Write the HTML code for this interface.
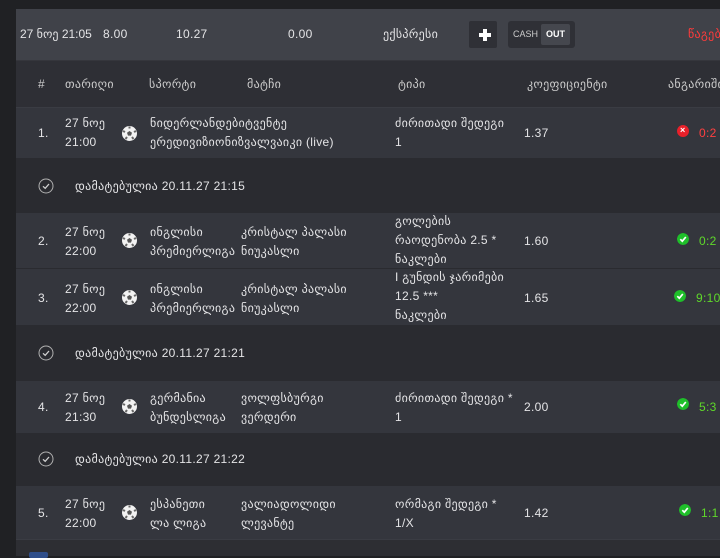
<!DOCTYPE html>
<html><head><meta charset="utf-8"><style>
*{margin:0;padding:0;box-sizing:border-box}
body{width:720px;height:556px;background:#202124;overflow:hidden;position:relative;font-family:"Liberation Sans","DejaVu Sans",sans-serif;color:#e4e4e6;font-size:12px}
.bar{position:absolute;left:16px;right:0}
.t{position:absolute;white-space:nowrap;line-height:19px;letter-spacing:0.3px}
.ball{position:absolute;width:15px;height:15px}
.chk{position:absolute;width:16px;height:16px}
.res{position:absolute;width:12px;height:12px;border-radius:50%}
</style></head><body>
<div class="bar" style="top:9px;height:51px;background:#404249"></div>
<div class="bar" style="top:60px;height:47px;background:#2e2f35;border-top:1px solid #35363c"></div>
<div class="bar" style="top:107px;height:51px;background:#34363d;border-top:1px solid #3a3c43"></div>
<div class="bar" style="top:158px;height:55px;background:#2a2b30"></div>
<div class="bar" style="top:213px;height:55px;background:#34363d"></div>
<div class="bar" style="top:268px;height:57px;background:#34363d;border-top:1px solid #2a2b30"></div>
<div class="bar" style="top:325px;height:56px;background:#2a2b30"></div>
<div class="bar" style="top:381px;height:52px;background:#34363d"></div>
<div class="bar" style="top:433px;height:53px;background:#2a2b30"></div>
<div class="bar" style="top:486px;height:53px;background:#34363d"></div>
<div class="bar" style="top:539px;height:17px;background:#2d2e33;border-top:1px solid #3a3c43"></div>
<div style="position:absolute;left:29px;top:552px;width:19px;height:6px;background:#2f4e8a;border-radius:2px"></div>

<!-- header -->
<div class="t" style="left:20px;top:25px;font-size:12px;letter-spacing:0">27 ნოე 21:05</div>
<div class="t" style="left:103px;top:25px">8.00</div>
<div class="t" style="left:176px;top:25px">10.27</div>
<div class="t" style="left:288px;top:25px">0.00</div>
<div class="t" style="left:383px;top:25px">ექსპრესი</div>
<div style="position:absolute;left:469px;top:21px;width:28px;height:27px;background:#2f3036;border-radius:2px"></div>
<div style="position:absolute;left:479px;top:33px;width:12px;height:4px;background:#fff"></div>
<div style="position:absolute;left:483px;top:29px;width:4px;height:12px;background:#fff"></div>
<div style="position:absolute;left:508px;top:21px;width:67px;height:27px;background:#2f3036;border-radius:3px"></div>
<div style="position:absolute;left:541px;top:24px;width:29px;height:21px;background:#45474e;border-radius:2px"></div>
<div class="t" style="left:513px;top:25px;font-size:9px;color:#ccc;letter-spacing:0">CASH</div>
<div class="t" style="left:546px;top:25px;font-size:9px;color:#fff;font-weight:bold;letter-spacing:0">OUT</div>
<div class="t" style="left:688px;top:25px;color:#ff3b3b">წაგება</div>

<!-- column headers -->
<div class="t" style="left:38px;top:75px;color:#ccc">#</div>
<div class="t" style="left:65px;top:75px;color:#ccc">თარიღი</div>
<div class="t" style="left:149px;top:75px;color:#ccc">სპორტი</div>
<div class="t" style="left:247px;top:75px;color:#ccc">მატჩი</div>
<div class="t" style="left:398px;top:75px;color:#ccc">ტიპი</div>
<div class="t" style="left:527px;top:75px;color:#ccc">კოეფიციენტი</div>
<div class="t" style="left:668px;top:75px;color:#ccc">ანგარიში</div>

<svg width="0" height="0" style="position:absolute"><defs>
<g id="b"><circle cx="7.5" cy="7.5" r="7.5" fill="#f2f2f2"/><polygon points="7.5,5 10,6.8 9,9.6 6,9.6 5,6.8" fill="#555"/><path d="M7.5 0.5 L7.5 2.5 M1 5 L3 6 M14 5 L12 6 M3.5 13 L5 11 M11.5 13 L10 11" stroke="#666" stroke-width="2"/></g>
<g id="c"><circle cx="8" cy="8" r="7" fill="none" stroke="#b0b0b0" stroke-width="1"/><path d="M5 8.3 L7.2 10.3 L11 6" fill="none" stroke="#d0d0d0" stroke-width="1.3"/></g>
<g id="g"><circle cx="6" cy="6" r="6" fill="#1fbf2a"/><path d="M3.3 6.2 L5.3 8.2 L8.8 4" fill="none" stroke="#fff" stroke-width="1.7"/></g>
</defs></svg>

<!-- row1 -->
<div class="t" style="left:38px;top:124px">1.</div>
<div class="t" style="left:65px;top:114px">27 ნოე<br>21:00</div>
<svg class="ball" style="left:122px;top:126px"><use href="#b"/></svg>
<div class="t" style="left:150px;top:114px">ნიდერლანდებიტვენტე<br>ერედივიზიონიზვალვაიკი (live)</div>
<div class="t" style="left:395px;top:114px">ძირითადი შედეგი<br>1</div>
<div class="t" style="left:524px;top:124px">1.37</div>
<div class="res" style="left:677px;top:125px;background:#e8202a"></div>
<div class="t" style="left:680px;top:121px;color:#fff;font-size:9px;font-weight:bold">×</div>
<div class="t" style="left:699px;top:124px;color:#ff4040">0:2</div>

<svg class="chk" style="left:38px;top:178px"><use href="#c"/></svg>
<div class="t" style="left:75px;top:177px">დამატებულია 20.11.27 21:15</div>

<!-- row2 -->
<div class="t" style="left:38px;top:232px">2.</div>
<div class="t" style="left:65px;top:223px">27 ნოე<br>22:00</div>
<svg class="ball" style="left:122px;top:233px"><use href="#b"/></svg>
<div class="t" style="left:150px;top:223px">ინგლისი<br>პრემიერლიგა</div>
<div class="t" style="left:241px;top:223px">კრისტალ პალასი<br>ნიუკასლი</div>
<div class="t" style="left:395px;top:212px">გოლების<br>რაოდენობა 2.5 *<br>ნაკლები</div>
<div class="t" style="left:524px;top:232px">1.60</div>
<svg class="res" style="left:677px;top:233px"><use href="#g"/></svg>
<div class="t" style="left:699px;top:232px;color:#5fd82a">0:2</div>

<!-- row3 -->
<div class="t" style="left:38px;top:289px">3.</div>
<div class="t" style="left:65px;top:280px">27 ნოე<br>22:00</div>
<svg class="ball" style="left:122px;top:290px"><use href="#b"/></svg>
<div class="t" style="left:150px;top:280px">ინგლისი<br>პრემიერლიგა</div>
<div class="t" style="left:241px;top:280px">კრისტალ პალასი<br>ნიუკასლი</div>
<div class="t" style="left:395px;top:268px">I გუნდის ჯარიმები<br>12.5 ***<br>ნაკლები</div>
<div class="t" style="left:524px;top:289px">1.65</div>
<svg class="res" style="left:674px;top:290px"><use href="#g"/></svg>
<div class="t" style="left:696px;top:289px;color:#5fd82a">9:10</div>

<svg class="chk" style="left:38px;top:345px"><use href="#c"/></svg>
<div class="t" style="left:75px;top:344px">დამატებულია 20.11.27 21:21</div>

<!-- row4 -->
<div class="t" style="left:38px;top:398px">4.</div>
<div class="t" style="left:65px;top:389px">27 ნოე<br>21:30</div>
<svg class="ball" style="left:122px;top:399px"><use href="#b"/></svg>
<div class="t" style="left:150px;top:389px">გერმანია<br>ბუნდესლიგა</div>
<div class="t" style="left:241px;top:389px">ვოლფსბურგი<br>ვერდერი</div>
<div class="t" style="left:395px;top:389px">ძირითადი შედეგი *<br>1</div>
<div class="t" style="left:524px;top:398px">2.00</div>
<svg class="res" style="left:677px;top:398px"><use href="#g"/></svg>
<div class="t" style="left:699px;top:398px;color:#5fd82a">5:3</div>

<svg class="chk" style="left:38px;top:451px"><use href="#c"/></svg>
<div class="t" style="left:75px;top:450px">დამატებულია 20.11.27 21:22</div>

<!-- row5 -->
<div class="t" style="left:38px;top:504px">5.</div>
<div class="t" style="left:65px;top:495px">27 ნოე<br>22:00</div>
<svg class="ball" style="left:122px;top:505px"><use href="#b"/></svg>
<div class="t" style="left:150px;top:495px">ესპანეთი<br>ლა ლიგა</div>
<div class="t" style="left:241px;top:495px">ვალიადოლიდი<br>ლევანტე</div>
<div class="t" style="left:395px;top:495px">ორმაგი შედეგი *<br>1/X</div>
<div class="t" style="left:524px;top:504px">1.42</div>
<svg class="res" style="left:679px;top:504px"><use href="#g"/></svg>
<div class="t" style="left:701px;top:504px;color:#5fd82a">1:1</div>
</body></html>
